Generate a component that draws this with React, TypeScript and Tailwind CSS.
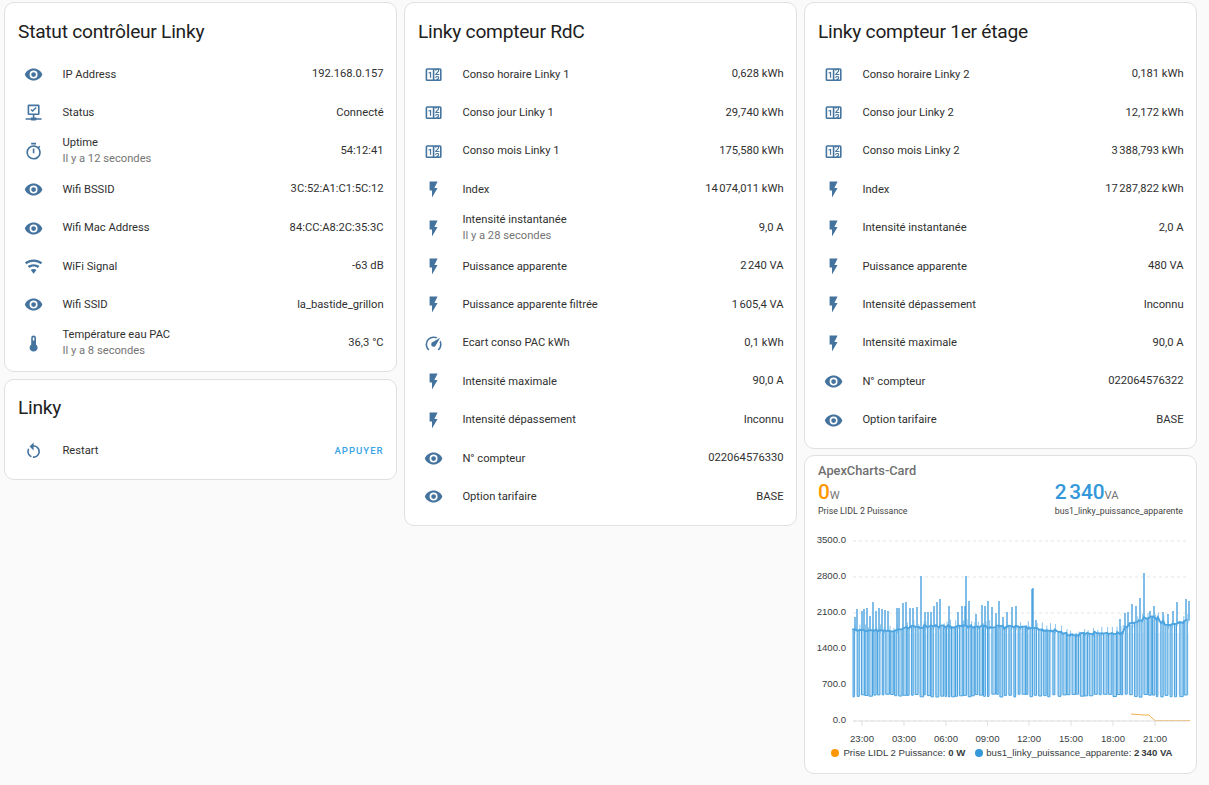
import React from "react";

const mdi = {
  eye: "M12,9A3,3 0 0,0 9,12A3,3 0 0,0 12,15A3,3 0 0,0 15,12A3,3 0 0,0 12,9M12,17A5,5 0 0,1 7,12A5,5 0 0,1 12,7A5,5 0 0,1 17,12A5,5 0 0,1 12,17M12,4.5C7,4.5 2.73,7.61 1,12C2.73,16.39 7,19.5 12,19.5C17,19.5 21.27,16.39 23,12C21.27,7.61 17,4.5 12,4.5Z",
  flash: "M7,2V13H10V22L17,10H13L17,2H7Z",
  thermometer: "M15 13V5A3 3 0 0 0 9 5V13A5 5 0 1 0 15 13M12 4A1 1 0 0 1 13 5V8H11V5A1 1 0 0 1 12 4Z",
  restart: "M12,4C14.1,4 16.1,4.8 17.6,6.3C20.7,9.4 20.7,14.5 17.6,17.6C15.8,19.5 13.3,20.2 10.9,19.9L11.4,17.9C13.1,18.1 14.9,17.5 16.2,16.2C18.5,13.9 18.5,10.1 16.2,7.7C15.1,6.6 13.5,6 12,6V10.6L7,5.6L12,0.6V4M6.3,17.6C3.7,15 3.3,11 5.1,7.9L6.6,9.4C5.5,11.6 5.9,14.4 7.8,16.2C8.3,16.7 8.9,17.1 9.6,17.4L9,19.4C8,19 7.1,18.4 6.3,17.6Z",
  timer: "M12,20A7,7 0 0,1 5,13A7,7 0 0,1 12,6A7,7 0 0,1 19,13A7,7 0 0,1 12,20M19.03,7.39L20.45,5.97C20,5.46 19.55,5 19.04,4.56L17.62,6C16.07,4.74 14.12,4 12,4A9,9 0 0,0 3,13A9,9 0 0,0 12,22C17,22 21,17.97 21,13C21,10.88 20.26,8.93 19.03,7.39M11,14H13V8H11M15,1H9V3H15V1Z",
  wifi: "M12,21L15.6,16.2C14.6,15.45 13.35,15 12,15C10.65,15 9.4,15.45 8.4,16.2L12,21M12,3C7.95,3 4.21,4.34 1.2,6.6L3,9C5.5,7.12 8.62,6 12,6C15.38,6 18.5,7.12 21,9L22.8,6.6C19.79,4.34 16.05,3 12,3M12,9C9.3,9 6.81,9.89 4.8,11.4L6.6,13.8C8.1,12.67 9.97,12 12,12C14.03,12 15.9,12.67 17.4,13.8L19.2,11.4C17.19,9.89 14.7,9 12,9Z",
  speedometer: "M12,16A3,3 0 0,1 9,13C9,11.88 9.61,10.9 10.5,10.39L20.21,4.77L14.68,14.35C14.18,15.33 13.17,16 12,16M12,3C13.81,3 15.5,3.5 16.97,4.32L14.87,5.53C14,5.19 13,5 12,5A8,8 0 0,0 4,13C4,15.21 4.89,17.21 6.34,18.65H6.35C6.74,19.04 6.74,19.67 6.35,20.06C5.96,20.45 5.32,20.45 4.93,20.07V20.07C3.12,18.26 2,15.76 2,13A10,10 0 0,1 12,3M22,13C22,15.76 20.88,18.26 19.07,20.07V20.07C18.68,20.45 18.05,20.45 17.66,20.06C17.27,19.67 17.27,19.04 17.66,18.65V18.65C19.11,17.2 20,15.21 20,13C20,12 19.81,11 19.46,10.1L20.67,8C21.5,9.5 22,11.18 22,13Z",
  counter: "M4,4H20A2,2 0 0,1 22,6V18A2,2 0 0,1 20,20H4A2,2 0 0,1 2,18V6A2,2 0 0,1 4,4M4,6V18H11V6H4M20,18V6H18.76C19,6.54 18.95,7.07 18.95,7.13C18.88,7.8 18.41,8.5 18.24,8.75L15.91,11.3L19.23,11.28L19.24,12.5L14.04,12.47L14,11.47C14,11.47 17.05,8.24 17.2,7.95C17.34,7.67 17.91,6 16.5,6C15.27,6.05 15.41,7.3 15.41,7.3L13.87,7.31C13.87,7.31 13.88,6.65 14.25,6H13V18H15.58L15.57,17.14L16.54,17.13C16.54,17.13 17.45,16.97 17.46,16.08C17.5,15.08 16.65,15.08 16.5,15.08C16.37,15.08 15.43,15.13 15.43,15.95H13.91C13.91,15.95 13.95,13.89 16.5,13.89C19.1,13.89 18.96,15.91 18.96,15.91C18.96,15.91 19,17.16 17.85,17.63L18.37,18H20M8.92,16H7.42V10.2L5.62,10.76V9.53L8.76,8.41H8.92V16Z",
  status: "M6,2H18A1.5,1.5 0 0,1 19.5,3.5V13.5A1.5,1.5 0 0,1 18,15H13V18H15.5V19H22V21H15.5A1,1 0 0,1 14.5,22H9.5A1,1 0 0,1 8.5,21H2V19H8.5V18H11V15H6A1.5,1.5 0 0,1 4.5,13.5V3.5A1.5,1.5 0 0,1 6,2M6.5,4V13H17.5V4H6.5M10.8,11.2L8.2,8.6L9.4,7.4L10.8,8.8L14.6,5L15.8,6.2L10.8,11.2Z",
};

type IconName = keyof typeof mdi;

type Row = {
  icon: IconName;
  name: string;
  value: string;
  sub?: string;
  action?: boolean;
};

const Icon = ({ name }: { name: IconName }) => (
  <svg viewBox="0 0 24 24" className="h-[19.2px] w-[19.2px] fill-[#44739e]">
    <path d={mdi[name]} />
  </svg>
);

const EntityRow = ({ row }: { row: Row }) => (
  <div className="flex h-[38.4px] items-center">
    <div className="flex w-[32px] shrink-0 items-center justify-center">
      <Icon name={row.icon} />
    </div>
    <div className="ml-[12.4px] min-w-0 flex-1 leading-[16px] text-[#303030]">
      <div>{row.name}</div>
      {row.sub && <div className="text-[#757575]">{row.sub}</div>}
    </div>
    {row.action ? (
      <span className="text-[9.6px] font-medium tracking-[1px] text-[#3aa5e6]">{row.value}</span>
    ) : (
      <span className="text-[#303030]">{row.value}</span>
    )}
  </div>
);

const Card = ({ title, rows }: { title: string; rows: Row[] }) => (
  <div className="rounded-[10px] border border-[#e0e0e0] bg-white pb-[8.6px]">
    <h2 className="h-[52.5px] pl-[13px] pt-[15.6px] text-[19.2px] leading-[25.6px] font-normal tracking-[-0.26px] text-[#212121]">
      {title}
    </h2>
    <div className="pl-[13px] pr-[12.4px]">
      {rows.map((row) => (
        <EntityRow key={row.name} row={row} />
      ))}
    </div>
  </div>
);

const statut: Row[] = [
  { icon: "eye", name: "IP Address", value: "192.168.0.157" },
  { icon: "status", name: "Status", value: "Connecté" },
  { icon: "timer", name: "Uptime", sub: "Il y a 12 secondes", value: "54:12:41" },
  { icon: "eye", name: "Wifi BSSID", value: "3C:52:A1:C1:5C:12" },
  { icon: "eye", name: "Wifi Mac Address", value: "84:CC:A8:2C:35:3C" },
  { icon: "wifi", name: "WiFi Signal", value: "-63 dB" },
  { icon: "eye", name: "Wifi SSID", value: "la_bastide_grillon" },
  { icon: "thermometer", name: "Température eau PAC", sub: "Il y a 8 secondes", value: "36,3 °C" },
];

const rdc: Row[] = [
  { icon: "counter", name: "Conso horaire Linky 1", value: "0,628 kWh" },
  { icon: "counter", name: "Conso jour Linky 1", value: "29,740 kWh" },
  { icon: "counter", name: "Conso mois Linky 1", value: "175,580 kWh" },
  { icon: "flash", name: "Index", value: "14\u202f074,011 kWh" },
  { icon: "flash", name: "Intensité instantanée", sub: "Il y a 28 secondes", value: "9,0 A" },
  { icon: "flash", name: "Puissance apparente", value: "2\u202f240 VA" },
  { icon: "flash", name: "Puissance apparente filtrée", value: "1\u202f605,4 VA" },
  { icon: "speedometer", name: "Ecart conso PAC kWh", value: "0,1 kWh" },
  { icon: "flash", name: "Intensité maximale", value: "90,0 A" },
  { icon: "flash", name: "Intensité dépassement", value: "Inconnu" },
  { icon: "eye", name: "N° compteur", value: "022064576330" },
  { icon: "eye", name: "Option tarifaire", value: "BASE" },
];

const etage: Row[] = [
  { icon: "counter", name: "Conso horaire Linky 2", value: "0,181 kWh" },
  { icon: "counter", name: "Conso jour Linky 2", value: "12,172 kWh" },
  { icon: "counter", name: "Conso mois Linky 2", value: "3\u202f388,793 kWh" },
  { icon: "flash", name: "Index", value: "17\u202f287,822 kWh" },
  { icon: "flash", name: "Intensité instantanée", value: "2,0 A" },
  { icon: "flash", name: "Puissance apparente", value: "480 VA" },
  { icon: "flash", name: "Intensité dépassement", value: "Inconnu" },
  { icon: "flash", name: "Intensité maximale", value: "90,0 A" },
  { icon: "eye", name: "N° compteur", value: "022064576322" },
  { icon: "eye", name: "Option tarifaire", value: "BASE" },
];

// the trace below is in page pixels, read off the screenshot
const basePoints = [
  [853, 631], [880, 631], [890, 633], [905, 628], [960, 627], [1000, 628], [1030, 628],
  [1040, 630], [1055, 632], [1070, 636], [1095, 634], [1120, 634], [1125, 628],
  [1140, 620], [1155, 618], [1165, 627], [1185, 621], [1190, 622],
];

const spikes = [
  [855, 618], [857, 610], [862, 612], [864, 610], [867, 609], [870, 617], [873, 603], [876, 612],
  [879, 609], [882, 610], [885, 611], [888, 612], [897, 609], [899, 609], [903, 604], [906, 603],
  [910, 609], [913, 609], [917, 608], [921, 577], [925, 613], [928, 613], [931, 613], [934, 607],
  [937, 603], [940, 600], [949, 607], [958, 613], [962, 607], [965, 607], [966, 577], [969, 602],
  [976, 615], [982, 606], [985, 607], [988, 602], [992, 608], [996, 614], [999, 602], [1003, 618],
  [1007, 613], [1012, 608], [1016, 607], [1032, 590], [1033, 589], [1036, 621], [1120, 620],
  [1125, 614], [1128, 613], [1132, 605], [1136, 607], [1140, 599], [1144, 574], [1150, 612],
  [1154, 607], [1163, 613], [1168, 615], [1173, 612], [1177, 603], [1186, 600], [1189, 602],
];

const baseAt = (x: number) => {
  for (let i = 1; i < basePoints.length; i++) {
    const [x0, y0] = basePoints[i - 1];
    const [x1, y1] = basePoints[i];
    if (x <= x1) return y0 + ((y1 - y0) * (x - x0)) / (x1 - x0);
  }
  return 622;
};

let seed = 7;
const rnd = () => {
  seed = (seed * 16807) % 2147483647;
  return seed / 2147483647;
};

let dips = "M853 631";
let baseLine = "M853 631";
let ticks = "";
const bars: number[][] = [];
for (let x = 853; x < 1189; ) {
  const y = baseAt(x);
  const w = 1.4 + rnd() * 2.4;
  const bottom = 695 + rnd() * 3.2;
  dips += ` L${x.toFixed(1)} ${y.toFixed(1)} L${x.toFixed(1)} ${bottom.toFixed(1)} L${(x + w).toFixed(1)} ${bottom.toFixed(1)} L${(x + w).toFixed(1)} ${y.toFixed(1)}`;
  bars.push([x, y, w, bottom - y]);
  baseLine += ` L${x.toFixed(1)} ${(y + rnd() * 3 - 1.5).toFixed(1)} L${(x + w).toFixed(1)} ${(y + rnd() * 3 - 1.5).toFixed(1)}`;
  ticks += ` M${(x + w + 0.6).toFixed(1)} ${(y + 3).toFixed(1)} L${(x + w + 0.6).toFixed(1)} ${(y - 2 - rnd() * 5).toFixed(1)}`;
  x += (x < 1040 ? 3.2 : 3.8) + rnd() * 1.8;
}
const spikePath = spikes.map(([x, y]) => `M${x} ${baseAt(x)} L${x} ${y}`).join(" ");

const yTicks = [
  ["3500.0", 542],
  ["2800.0", 578],
  ["2100.0", 614],
  ["1400.0", 650],
  ["700.0", 686],
  ["0.0", 722],
] as const;

const xTicks = [
  ["23:00", 862],
  ["03:00", 904],
  ["06:00", 946],
  ["09:00", 987.5],
  ["12:00", 1029],
  ["15:00", 1071],
  ["18:00", 1113],
  ["21:00", 1155],
] as const;

const Chart = () => (
  <svg
    viewBox="805 530 391 218"
    className="block h-[218px] w-[391px] font-['Liberation_Sans',Arial,sans-serif]"
  >
    {yTicks.map(([label, y]) => (
      <g key={label}>
        <line x1="853" x2="1189" y1={y} y2={y} stroke="#e4e4e4" strokeDasharray="3 3" />
        <text x="846" y={y + 2} textAnchor="end" fontSize="9.6" fill="#373d3f">
          {label}
        </text>
      </g>
    ))}
    <path d="M853 634 H1189 V696 H853 Z" fill="#e9f4fc" />
    {bars.map(([x, y, w, h]) => (
      <rect key={x} x={x} y={y} width={w} height={h} fill="#a9d5f2" />
    ))}
    <path d={dips} fill="none" stroke="#4ba3e0" strokeWidth="1" />
    <path d={spikePath} fill="none" stroke="#4ba3e0" strokeWidth="1.4" />
    <path d={ticks} fill="none" stroke="#6bb4e6" strokeWidth="0.8" />
    <path d={baseLine} fill="none" stroke="#4ba3e0" strokeWidth="1.8" />
    <path
      d="M1131 715 L1138 715.5 L1144 716 L1149 716 L1152 719 L1155 721.5 L1190 721.5"
      fill="none"
      stroke="#f6b04e"
      strokeWidth="1"
    />
    <line x1="853" x2="1189" y1="722" y2="722" stroke="#e0e0e0" />
    {xTicks.map(([label, x]) => (
      <g key={label}>
        <line x1={x} x2={x} y1="722" y2="727" stroke="#e0e0e0" />
        <text x={x} y="743" textAnchor="middle" fontSize="9.6" fill="#373d3f">
          {label}
        </text>
      </g>
    ))}
  </svg>
);

const ChartCard = () => (
  <div className="h-[318.6px] rounded-[10px] border border-[#e0e0e0] bg-white">
    <div className="h-[73px] px-[13px] pt-[5.6px]">
      <div className="text-[12.8px] leading-[18px] font-medium text-[#6f6f6f]">ApexCharts-Card</div>
      <div className="flex justify-between">
        <div>
          <div className="leading-[24px] text-[#757575]">
            <span className="text-[20.8px] font-medium text-[#ff9800]">0</span>
            <span className="text-[11.2px]">W</span>
          </div>
          <div className="-mt-[2px] text-[8.8px] leading-[11px] text-[#424242]">Prise LIDL 2 Puissance</div>
        </div>
        <div>
          <div className="leading-[24px] text-[#757575]">
            <span className="text-[20.8px] font-medium text-[#3498db]">2{"\u202f"}340</span>
            <span className="text-[11.2px]">VA</span>
          </div>
          <div className="-mt-[2px] text-[8.8px] leading-[11px] text-[#424242]">bus1_linky_puissance_apparente</div>
        </div>
      </div>
    </div>
    <Chart />
    <div className="flex items-center justify-center pl-[3px] font-['Liberation_Sans',Arial,sans-serif] text-[9.6px] leading-[12px] text-[#373d3f]">
      <span className="mr-[4px] h-[8px] w-[8px] rounded-full bg-[#ff9800]" />
      <span>
        Prise LIDL 2 Puissance: <b>0 W</b>
      </span>
      <span className="ml-[10px] mr-[3px] h-[8px] w-[8px] rounded-full bg-[#3498db]" />
      <span>
        bus1_linky_puissance_apparente: <b>2{"\u202f"}340 VA</b>
      </span>
    </div>
  </div>
);

const App = () => {
  return (
    <div className="flex h-screen items-start gap-[7px] overflow-hidden bg-[#fafafa] pl-[4px] pt-[2px] font-['Roboto','Liberation_Sans',sans-serif] text-[11.2px]">
      <div className="flex w-[393px] flex-col gap-[6.4px]">
        <Card title="Statut contrôleur Linky" rows={statut} />
        <Card
          title="Linky"
          rows={[{ icon: "restart", name: "Restart", value: "APPUYER", action: true }]}
        />
      </div>
      <div className="flex w-[393px] flex-col gap-[6.4px]">
        <Card title="Linky compteur RdC" rows={rdc} />
      </div>
      <div className="flex w-[393px] flex-col gap-[6.4px]">
        <Card title="Linky compteur 1er étage" rows={etage} />
        <ChartCard />
      </div>
    </div>
  );
};

export default App;
